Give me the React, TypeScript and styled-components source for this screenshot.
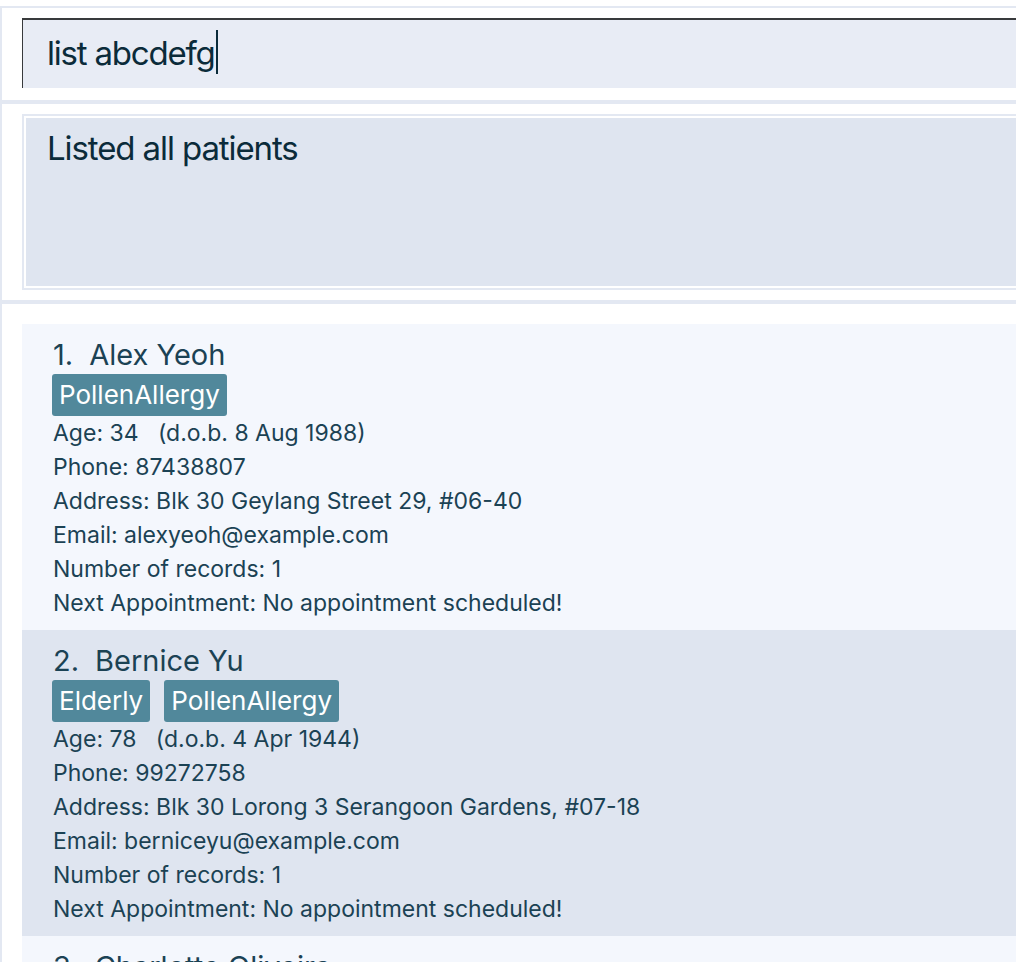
import React from "react";
import styled, { createGlobalStyle } from "styled-components";

const GlobalStyle = createGlobalStyle`
  html, body {
    margin: 0;
    padding: 0;
    background: #ffffff;
  }
  body {
    font-family: Inter, "Noto Sans", "Liberation Sans", sans-serif;
    -webkit-font-smoothing: antialiased;
  }
  #root {
    width: 1016px;
    height: 962px;
    overflow: hidden;
  }
`;

const STRIPE = "#e3e8f2";

const Page = styled.div`
  padding-top: 6px;
  height: 100%;
  box-sizing: border-box;
  background: #ffffff;
`;

const Frame = styled.div`
  border-top: 2px solid ${STRIPE};
  border-left: 2px solid ${STRIPE};
  height: 100%;
  display: flex;
  flex-direction: column;
`;

const Divider = styled.div`
  height: 4px;
  background: ${STRIPE};
  margin-left: -2px;
  flex-shrink: 0;
`;

const CommandSection = styled.div`
  height: 92px;
  box-sizing: border-box;
  padding: 10px 0 0 20px;
  flex-shrink: 0;
`;

const CommandBox = styled.div`
  height: 70px;
  box-sizing: border-box;
  border-top: 2px solid #383a3c;
  border-left: 1px solid #383a3c;
  background: #e8ecf5;
  padding-left: 24px;
  display: flex;
  align-items: center;
`;

const CommandText = styled.span`
  font-size: 33px;
  letter-spacing: -1.2px;
  color: #0b2b3a;
  line-height: 44px;
  margin-top: -2px;
`;

const Caret = styled.span`
  display: inline-block;
  width: 2px;
  height: 44px;
  background: #0b2b3a;
  margin-left: 1px;
  margin-top: -4px;
`;

const ResultSection = styled.div`
  height: 196px;
  box-sizing: border-box;
  padding: 10px 0 0 20px;
  flex-shrink: 0;
`;

const ResultOuter = styled.div`
  height: 176px;
  box-sizing: border-box;
  border: 2px solid ${STRIPE};
  border-right: none;
  padding: 2px 0 2px 2px;
`;

const ResultInner = styled.div`
  height: 100%;
  background: #dfe5f0;
  padding: 10px 0 0 21px;
  box-sizing: border-box;
  font-size: 33px;
  letter-spacing: -1.1px;
  line-height: 40px;
  color: #0b2b3a;
`;

const ListSection = styled.div`
  padding: 20px 0 0 20px;
  flex: 1;
  overflow: hidden;
`;

const Card = styled.div<{ $alt: boolean }>`
  height: 306px;
  box-sizing: border-box;
  background: ${(p) => (p.$alt ? "#dfe5f0" : "#f4f7fd")};
  padding: 14px 0 10px 31px;
  color: #1b4254;
`;

const Name = styled.div`
  font-size: 29px;
  letter-spacing: 0;
  line-height: 34px;
  display: flex;
  align-items: baseline;
`;

const Index = styled.span`
  margin-right: 16px;
`;

const Tags = styled.div`
  display: flex;
  gap: 14px;
  margin-top: 2px;
  margin-left: -1px;
`;

const Tag = styled.span`
  height: 42px;
  box-sizing: border-box;
  background: #51889b;
  color: #ffffff;
  border-radius: 3px;
  padding: 0 7px;
  font-size: 26px;
  letter-spacing: 0;
  line-height: 42px;
`;

const Detail = styled.div`
  font-size: 23px;
  letter-spacing: 0;
  line-height: 34px;
  white-space: pre;
`;

type Patient = {
  name: string;
  tags: string[];
  age: string;
  dob: string;
  phone: string;
  address: string;
  email: string;
  records: number;
};

const patients: Patient[] = [
  {
    name: "Alex Yeoh",
    tags: ["PollenAllergy"],
    age: "34",
    dob: "8 Aug 1988",
    phone: "87438807",
    address: "Blk 30 Geylang Street 29, #06-40",
    email: "alexyeoh@example.com",
    records: 1,
  },
  {
    name: "Bernice Yu",
    tags: ["Elderly", "PollenAllergy"],
    age: "78",
    dob: "4 Apr 1944",
    phone: "99272758",
    address: "Blk 30 Lorong 3 Serangoon Gardens, #07-18",
    email: "berniceyu@example.com",
    records: 1,
  },
  {
    name: "Charlotte Oliveira",
    tags: ["Diabetic"],
    age: "45",
    dob: "12 Jan 1977",
    phone: "93210283",
    address: "Blk 11 Ang Mo Kio Street 74, #11-04",
    email: "charlotte@example.com",
    records: 1,
  },
];

export default function App() {
  return (
    <>
      <GlobalStyle />
      <Page>
        <Frame>
          <CommandSection>
            <CommandBox>
              <CommandText>list abcdefg</CommandText>
              <Caret />
            </CommandBox>
          </CommandSection>
          <Divider />
          <ResultSection>
            <ResultOuter>
              <ResultInner>Listed all patients</ResultInner>
            </ResultOuter>
          </ResultSection>
          <Divider />
          <ListSection>
            {patients.map((p, i) => (
              <Card key={p.name} $alt={i % 2 === 1}>
                <Name>
                  <Index>{`${i + 1}.`}</Index>
                  <span>{p.name}</span>
                </Name>
                <Tags>
                  {p.tags.map((t) => (
                    <Tag key={t}>{t}</Tag>
                  ))}
                </Tags>
                <Detail>{`Age: ${p.age}   (d.o.b. ${p.dob})`}</Detail>
                <Detail>{`Phone: ${p.phone}`}</Detail>
                <Detail>{`Address: ${p.address}`}</Detail>
                <Detail>{`Email: ${p.email}`}</Detail>
                <Detail>{`Number of records: ${p.records}`}</Detail>
                <Detail>Next Appointment: No appointment scheduled!</Detail>
              </Card>
            ))}
          </ListSection>
        </Frame>
      </Page>
    </>
  );
}
